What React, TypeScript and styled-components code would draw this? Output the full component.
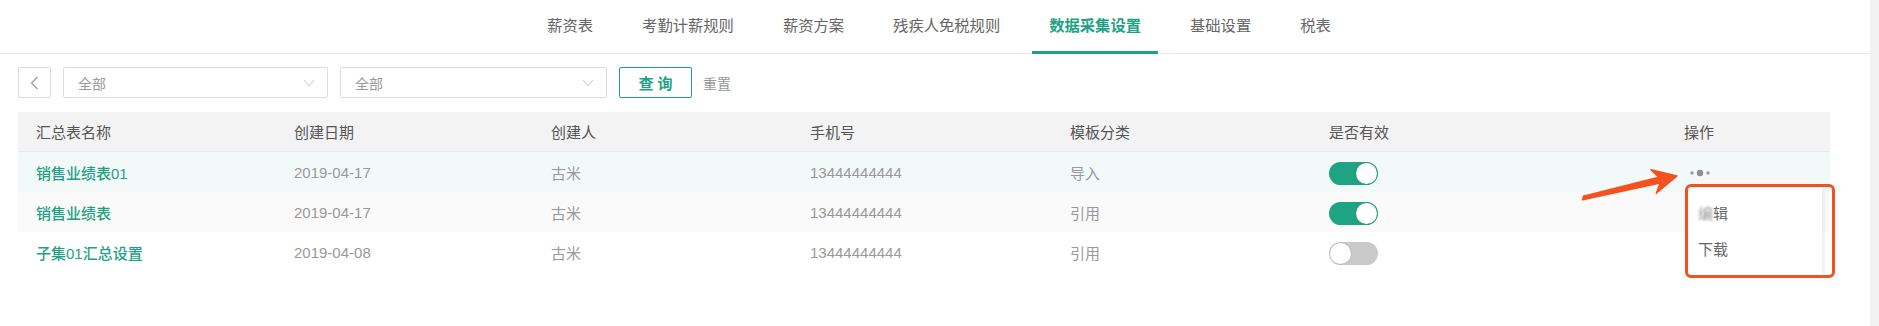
import React from "react";
import styled, { createGlobalStyle, css } from "styled-components";

const GREEN = "#1fa283";
const ORANGE = "#f4511e";

const Global = createGlobalStyle`
  html, body { margin: 0; padding: 0; background: #fff; }
  body { font-family: "Liberation Sans", "Noto Sans CJK SC", sans-serif; }
  * { box-sizing: border-box; }
`;

const Page = styled.div`
  display: flex;
  height: 326px;
  width: 1879px;
  overflow: hidden;
`;

const Main = styled.div`
  position: relative;
  flex: 1;
  display: flex;
  flex-direction: column;
`;

const ScrollStrip = styled.div`
  width: 9px;
  background: #f2f2f2;
`;

const TabBar = styled.nav`
  display: flex;
  justify-content: center;
  gap: 15px;
  height: 54px;
  padding-left: 8px;
  border-bottom: 1px solid #e8e8e8;
`;

const Tab = styled.div<{ $active?: boolean }>`
  position: relative;
  display: flex;
  align-items: center;
  padding: 0 17px 5px;
  font-size: 15.3px;
  color: #666;
  white-space: nowrap;
  ${(p) =>
    p.$active &&
    css`
      color: ${GREEN};
      font-weight: 700;
      &::after {
        content: "";
        position: absolute;
        left: 0;
        right: 0;
        bottom: -1px;
        height: 3px;
        background: ${GREEN};
      }
    `}
`;

const Toolbar = styled.div`
  display: flex;
  align-items: center;
  gap: 12px;
  margin: 13px 0 0 18px;
  height: 31px;
`;

const BackButton = styled.div`
  width: 33px;
  height: 31px;
  border: 1px solid #dcdcdc;
  border-radius: 2px;
  display: flex;
  align-items: center;
  justify-content: center;
`;

const Select = styled.div<{ $w: number }>`
  width: ${(p) => p.$w}px;
  height: 31px;
  border: 1px solid #dcdcdc;
  border-radius: 2px;
  display: flex;
  align-items: center;
  justify-content: space-between;
  padding: 0 12px 0 14px;
  font-size: 14px;
  color: #999;
`;

const QueryButton = styled.div`
  width: 73px;
  height: 31px;
  border: 1px solid ${GREEN};
  border-radius: 2px;
  display: flex;
  align-items: center;
  justify-content: center;
  font-size: 15px;
  font-weight: 700;
  color: ${GREEN};
  letter-spacing: 4px;
  padding-left: 4px;
`;

const ResetLink = styled.span`
  font-size: 14px;
  color: #999;
  margin-left: -1px;
`;

const Table = styled.div`
  margin: 14px 40px 0 18px;
`;

const COLS = "258px 257px 259px 260px 259px 355px 1fr";

const HeaderRow = styled.div`
  display: grid;
  grid-template-columns: ${COLS};
  height: 40px;
  background: #f3f3f3;
  border-bottom: 1px solid #e8e8e8;
`;

const Row = styled.div<{ $bg: string }>`
  display: grid;
  grid-template-columns: ${COLS};
  height: 40px;
  background: ${(p) => p.$bg};
`;

const HeadCell = styled.div`
  display: flex;
  align-items: center;
  padding-left: 18px;
  font-size: 15px;
  color: #555;
`;

const Cell = styled.div<{ $link?: boolean }>`
  position: relative;
  display: flex;
  align-items: center;
  padding-left: 18px;
  font-size: 15px;
  color: ${(p) => (p.$link ? GREEN : "#999")};
  font-weight: ${(p) => (p.$link ? 500 : 400)};
`;

const Switch = styled.div<{ $on: boolean }>`
  position: relative;
  width: 49px;
  height: 23px;
  border-radius: 12px;
  margin-top: 2px;
  background: ${(p) => (p.$on ? "#1ea483" : "#c9c9c9")};
  &::after {
    content: "";
    position: absolute;
    top: 1px;
    left: ${(p) => (p.$on ? "27px" : "1px")};
    width: 21px;
    height: 21px;
    border-radius: 50%;
    background: #fff;
    box-shadow: 0 0 0 0.5px rgba(0, 0, 0, 0.12);
  }
`;

const Dots = styled.svg`
  margin-left: 5px;
  margin-top: 2px;
`;

const Menu = styled.div`
  position: absolute;
  left: 22px;
  top: 36px;
  width: 134px;
  height: 87px;
  background: #fff;
  box-shadow: 0 1px 6px rgba(0, 0, 0, 0.14);
  padding: 14px 0 0 10px;
  display: flex;
  flex-direction: column;
  gap: 12px;
  z-index: 2;
`;

const MenuItem = styled.div`
  font-size: 15px;
  color: #666;
  line-height: 24px;
`;

const Smudge = styled.span`
  color: #9a9a9a;
  filter: blur(0.9px);
`;

const HighlightBox = styled.div`
  position: absolute;
  left: 19px;
  top: 32px;
  width: 150px;
  height: 94px;
  border: 3px solid ${ORANGE};
  border-radius: 6px;
  z-index: 3;
`;

const ArrowSvg = styled.svg`
  position: absolute;
  left: -91px;
  top: 8px;
  z-index: 3;
`;

const Chevron = ({ dir }: { dir: "left" | "down" }) =>
  dir === "left" ? (
    <svg width="9" height="14" viewBox="0 0 9 14">
      <path d="M7.5 1 L1.5 7 L7.5 13" fill="none" stroke="#999" strokeWidth="1.2" />
    </svg>
  ) : (
    <svg width="12" height="8" viewBox="0 0 12 8">
      <path d="M1 1 L6 7 L11 1" fill="none" stroke="#c8c8c8" strokeWidth="1" />
    </svg>
  );

const tabs = ["薪资表", "考勤计薪规则", "薪资方案", "残疾人免税规则", "数据采集设置", "基础设置", "税表"];
const headers = ["汇总表名称", "创建日期", "创建人", "手机号", "模板分类", "是否有效", "操作"];

const rows = [
  { name: "销售业绩表01", date: "2019-04-17", user: "古米", phone: "13444444444", kind: "导入", on: true, bg: "#f3f9f9" },
  { name: "销售业绩表", date: "2019-04-17", user: "古米", phone: "13444444444", kind: "引用", on: true, bg: "#fafafa" },
  { name: "子集01汇总设置", date: "2019-04-08", user: "古米", phone: "13444444444", kind: "引用", on: false, bg: "#ffffff" },
];

export default function App() {
  return (
    <>
      <Global />
      <Page>
        <Main>
          <TabBar>
            {tabs.map((t) => (
              <Tab key={t} $active={t === "数据采集设置"}>
                {t}
              </Tab>
            ))}
          </TabBar>
          <Toolbar>
            <BackButton>
              <Chevron dir="left" />
            </BackButton>
            <Select $w={265}>
              全部
              <Chevron dir="down" />
            </Select>
            <Select $w={267}>
              全部
              <Chevron dir="down" />
            </Select>
            <QueryButton>查询</QueryButton>
            <ResetLink>重置</ResetLink>
          </Toolbar>
          <Table>
            <HeaderRow>
              {headers.map((h) => (
                <HeadCell key={h}>{h}</HeadCell>
              ))}
            </HeaderRow>
            {rows.map((r, i) => (
              <Row key={i} $bg={r.bg}>
                <Cell $link>{r.name}</Cell>
                <Cell>{r.date}</Cell>
                <Cell>{r.user}</Cell>
                <Cell>{r.phone}</Cell>
                <Cell>{r.kind}</Cell>
                <Cell>
                  <Switch $on={r.on} />
                </Cell>
                <Cell>
                  {i === 0 && (
                    <>
                      <Dots width="22" height="8" viewBox="0 0 22 8">
                        <circle cx="3" cy="4" r="1.7" fill="#9a9a9a" />
                        <circle cx="11" cy="4" r="3.2" fill="#8f8f8f" />
                        <circle cx="19" cy="4" r="1.7" fill="#9a9a9a" />
                      </Dots>
                      <Menu>
                        <MenuItem>
                          <Smudge>编</Smudge>辑
                        </MenuItem>
                        <MenuItem>下载</MenuItem>
                      </Menu>
                      <HighlightBox />
                      <ArrowSvg width="110" height="45" viewBox="0 0 110 45">
                        <polygon
                          points="7.6,39.75 8.4,36.25 83.8,17.2 75.9,9.8 102,16 81.3,33.2 85.2,23"
                          fill={ORANGE}
                          stroke={ORANGE}
                          strokeWidth="1.5"
                          strokeLinejoin="round"
                        />
                      </ArrowSvg>
                    </>
                  )}
                </Cell>
              </Row>
            ))}
          </Table>
        </Main>
        <ScrollStrip />
      </Page>
    </>
  );
}
